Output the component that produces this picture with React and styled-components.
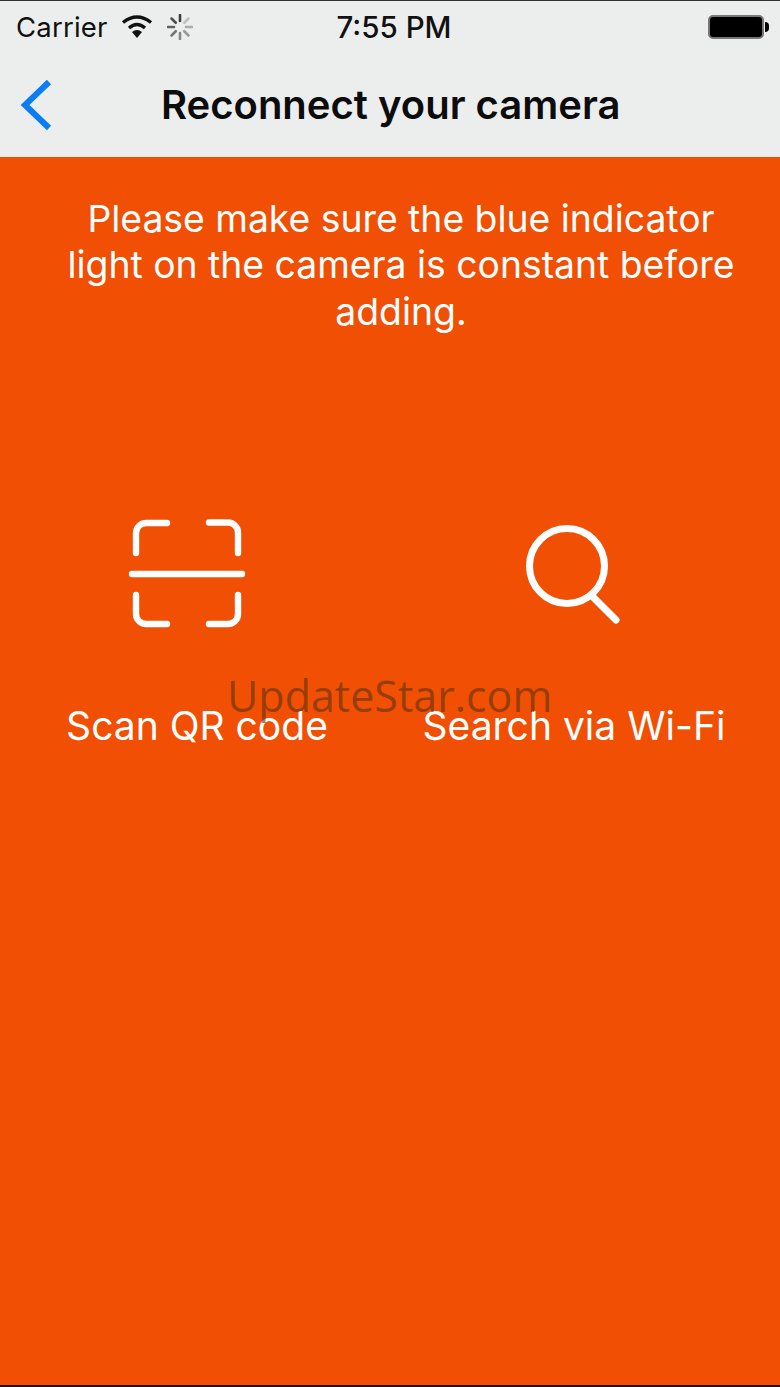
import styled, { createGlobalStyle } from 'styled-components';

const GlobalStyle = createGlobalStyle`
  html, body {
    margin: 0;
    padding: 0;
    background: #f14f04;
  }
  * {
    box-sizing: border-box;
  }
`;

/* Page */
const Page = styled.div`
  position: relative;
  width: 780px;
  height: 1387px;
  display: flex;
  flex-direction: column;
  overflow: hidden;
  font-family: Inter, "Liberation Sans", sans-serif;
  border-top: 1px solid #333;
  border-bottom: 2px solid #2a0d00;
  background: #f14f04;
`;

/* Header */
const Header = styled.header`
  height: 156px;
  flex: none;
  background: #eceeee;
  display: flex;
  flex-direction: column;
`;

const StatusBar = styled.div`
  height: 51px;
  display: grid;
  grid-template-columns: 1fr auto 1fr;
  align-items: center;
  padding: 0 8px 0 16px;
  color: #111;
`;

const StatusLeft = styled.div`
  display: flex;
  align-items: center;
`;

const Carrier = styled.span`
  font-size: 27.5px;
  letter-spacing: 0.2px;
  margin-right: 13px;
`;

const SpinnerIcon = styled.svg`
  margin-left: 14px;
`;

const Time = styled.span`
  font-size: 29.5px;
  font-weight: 500;
`;

const Battery = styled.div`
  position: relative;
  justify-self: end;
  width: 56px;
  height: 24px;
  background: #000;
  border: 2px solid #777;
  border-radius: 5px;
  margin-right: 8px;

  &::after {
    content: '';
    position: absolute;
    right: -7px;
    top: 5px;
    width: 4px;
    height: 10px;
    background: #000;
    border-radius: 0 4px 4px 0;
  }
`;

const NavBar = styled.nav`
  flex: 1;
  display: flex;
  align-items: center;
  padding: 0 0 0 20px;
`;

const Title = styled.h1`
  margin: 0 0 0 109px;
  font-size: 40px;
  font-weight: 600;
  color: #0c0c0c;
  white-space: nowrap;
`;

/* Body */
const Content = styled.main`
  flex: 1;
  padding-top: 38.5px;
  color: #fff;
`;

const Notice = styled.p`
  margin: 0 auto;
  width: 700px;
  padding-left: 22px;
  font-size: 37.3px;
  line-height: 46.5px;
  text-align: center;
`;

const Options = styled.div`
  margin-top: 182.5px;
  display: grid;
  grid-template-columns: 394px 1fr;
`;

const Option = styled.div`
  display: flex;
  flex-direction: column;
  align-items: center;
  padding-right: ${props => props.$outset || 0}px;
`;

const OptionIcon = styled.svg`
  margin-right: ${props => props.$shift || 0}px;
  stroke: #fff;
  fill: none;
  stroke-linecap: round;
`;

const Label = styled.span`
  margin-top: 73px;
  font-size: 39px;
  line-height: 46px;
  white-space: nowrap;
`;

const Watermark = styled.div`
  position: absolute;
  left: 227px;
  top: 669px;
  font-size: 43px;
  line-height: 52px;
  color: rgba(90, 50, 10, 0.62);
  font-family: "Open Sans", sans-serif;
  white-space: nowrap;
`;

const spokes = [0, 45, 90, 135, 180, 225, 270, 315];

function App() {
  return (
    <Page>
      <GlobalStyle />
      <Header>
        <StatusBar>
          <StatusLeft>
            <Carrier>Carrier</Carrier>
            <svg width="32" height="24" viewBox="0 0 32 24">
              <path d="M16 23l-5-6q5-4 10 0z" fill="#111" />
              <path d="M8 13q8-7 16 0" fill="none" stroke="#111" strokeWidth="3.4" />
              <path d="M2 7.5q14-11 28 0" fill="none" stroke="#111" strokeWidth="3.4" />
            </svg>
            <SpinnerIcon width="26" height="26" viewBox="-13 -13 26 26">
              {spokes.map((a, i) => (
                <line
                  key={a}
                  x1="0"
                  y1="-6"
                  x2="0"
                  y2="-12"
                  stroke="#333"
                  strokeOpacity={0.25 + i * 0.1}
                  strokeWidth="2.6"
                  strokeLinecap="round"
                  transform={`rotate(${a + 45})`}
                />
              ))}
            </SpinnerIcon>
          </StatusLeft>
          <Time>7:55 PM</Time>
          <Battery />
        </StatusBar>
        <NavBar>
          <svg width="32" height="52" viewBox="0 0 32 52">
            <path d="M29 3L5 26l24 23" fill="none" stroke="#0a7cf5" strokeWidth="6" />
          </svg>
          <Title>Reconnect your camera</Title>
        </NavBar>
      </Header>
      <Content>
        <Notice>
          Please make sure the blue indicator light on the camera is constant before adding.
        </Notice>
        <Options>
          <Option>
            <OptionIcon $shift={19} width="120" height="112" viewBox="0 0 120 112" strokeWidth="6.4">
              <path d="M8 35V15a10 10 0 0 1 10-10H39" />
              <path d="M81 4.500H100a10 10 0 0 1 10 10V35" />
              <path d="M8 77V96a10 10 0 0 0 10 10H39" />
              <path d="M81 106H100a10 10 0 0 0 10-10V77" />
              <path d="M4 56H114" />
            </OptionIcon>
            <Label>Scan QR code</Label>
          </Option>
          <Option $outset={26}>
            <OptionIcon width="110" height="112" viewBox="0 0 110 112" strokeWidth="7">
              <circle cx="48" cy="48" r="37.500" />
              <path d="M73 78L97 102" />
            </OptionIcon>
            <Label>Search via Wi-Fi</Label>
          </Option>
        </Options>
      </Content>
      <Watermark>UpdateStar.com</Watermark>
    </Page>
  );
}

export default App;
